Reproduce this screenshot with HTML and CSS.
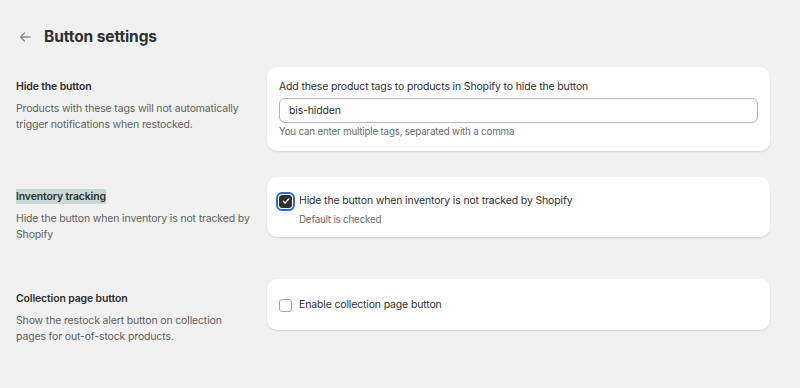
FILE: index.html
```html
<html><head>
  <title>Button settings</title>
  <link rel="stylesheet" href="styles.css">
</head>
<body>
  <main>
    <header class="page-header">
      <button class="back-button" aria-label="Back">
        <svg width="14" height="14" viewBox="0 0 14 14"><path d="M12 7H2.5M6.5 3L2.5 7l4 4" fill="none" stroke="#8a8a8a" stroke-width="1.3" stroke-linecap="round" stroke-linejoin="round"/></svg>
      </button>
      <h1>Button settings</h1>
    </header>

    <section class="setting">
      <div class="setting-info">
        <h2>Hide the button</h2>
        <p>Products with these tags will not automatically trigger notifications when restocked.</p>
      </div>
      <div class="card">
        <label for="hideTags" class="field-label">Add these product tags to products in Shopify to hide the button</label>
        <input type="text" id="hideTags" class="text-input" value="bis-hidden">
        <div class="help-text">You can enter multiple tags, separated with a comma</div>
      </div>
    </section>

    <section class="setting">
      <div class="setting-info">
        <h2><span class="highlight">Inventory tracking</span></h2>
        <p>Hide the button when inventory is not tracked by Shopify</p>
      </div>
      <div class="card card-check">
        <label class="check-row">
          <span class="checkbox checked focused">
            <svg width="8" height="8" viewBox="0 0 8 8"><path d="M1.3 4.2l1.8 1.8L6.7 2" fill="none" stroke="#fff" stroke-width="1.3" stroke-linecap="round" stroke-linejoin="round"/></svg>
          </span>
          <span class="check-label">Hide the button when inventory is not tracked by Shopify</span>
        </label>
        <div class="help-text check-help">Default is checked</div>
      </div>
    </section>

    <section class="setting">
      <div class="setting-info">
        <h2>Collection page button</h2>
        <p>Show the restock alert button on collection pages for out-of-stock products.</p>
      </div>
      <div class="card card-center">
        <label class="check-row">
          <span class="checkbox"></span>
          <span class="check-label">Enable collection page button</span>
        </label>
      </div>
    </section>
  </main>
</body></html>
```

FILE: styles.css
```css
body {
  margin: 0;
  background: #f1f1f1;
  font-family: Inter, "Noto Sans", sans-serif;
  color: #303030;
  font-size: 10.5px;
  letter-spacing: -0.15px;
}

main {
  padding: 26px 30px 0 16px;
}

.page-header {
  display: flex;
  align-items: center;
  gap: 10px;
  margin-bottom: 19px;
}

.back-button {
  display: flex;
  align-items: center;
  justify-content: center;
  width: 18px;
  height: 22px;
  padding: 0;
  border: none;
  background: none;
}

.page-header h1 {
  margin: 0;
  font-size: 15.5px;
  font-weight: 700;
  line-height: 22px;
  letter-spacing: -0.1px;
}

.setting {
  display: grid;
  grid-template-columns: 236px 1fr;
  gap: 15px;
  margin-bottom: 26px;
  align-items: start;
}

.setting-info {
  padding: 12px 0 10px;
}

.setting-info h2 {
  margin: 0 0 6px;
  font-size: 10.5px;
  font-weight: 600;
  line-height: 16px;
}

.highlight {
  background: #c8d9d3;
  padding: 1px 0;
}

.setting-info p {
  margin: 0;
  color: #616161;
  line-height: 16px;
}

.card {
  background: #fff;
  border-radius: 10px;
  box-shadow: 0 1px 2px rgba(0, 0, 0, 0.13);
  padding: 12px 12px 12px;
}

.card-check {
  padding: 16px 12px 10px;
}

.card-center {
  padding: 18px 12px 17px;
}

.field-label {
  display: block;
  line-height: 16px;
  margin-bottom: 3px;
}

.text-input {
  display: block;
  width: 100%;
  box-sizing: border-box;
  height: 25px;
  padding: 0 9px;
  border: 1px solid #b5b5b5;
  border-radius: 6px;
  font-family: inherit;
  font-size: 10.5px;
  letter-spacing: -0.15px;
  color: #303030;
}

.help-text {
  color: #6b6b6b;
  font-size: 9.8px;
  letter-spacing: -0.2px;
  line-height: 15px;
  margin-top: 1px;
}

.check-row {
  display: flex;
  align-items: center;
  gap: 7px;
}

.checkbox {
  display: flex;
  align-items: center;
  justify-content: center;
  width: 11px;
  height: 11px;
  border: 1px solid #a8a8a8;
  border-radius: 3px;
  background: #fff;
}

.checkbox.checked {
  background: #303030;
  border-color: #303030;
}

.checkbox.focused {
  outline: 2px solid #2e6ad6;
  outline-offset: 1px;
}

.check-label {
  line-height: 16px;
}

.check-help {
  margin-left: 20px;
  margin-top: 3px;
}
```
